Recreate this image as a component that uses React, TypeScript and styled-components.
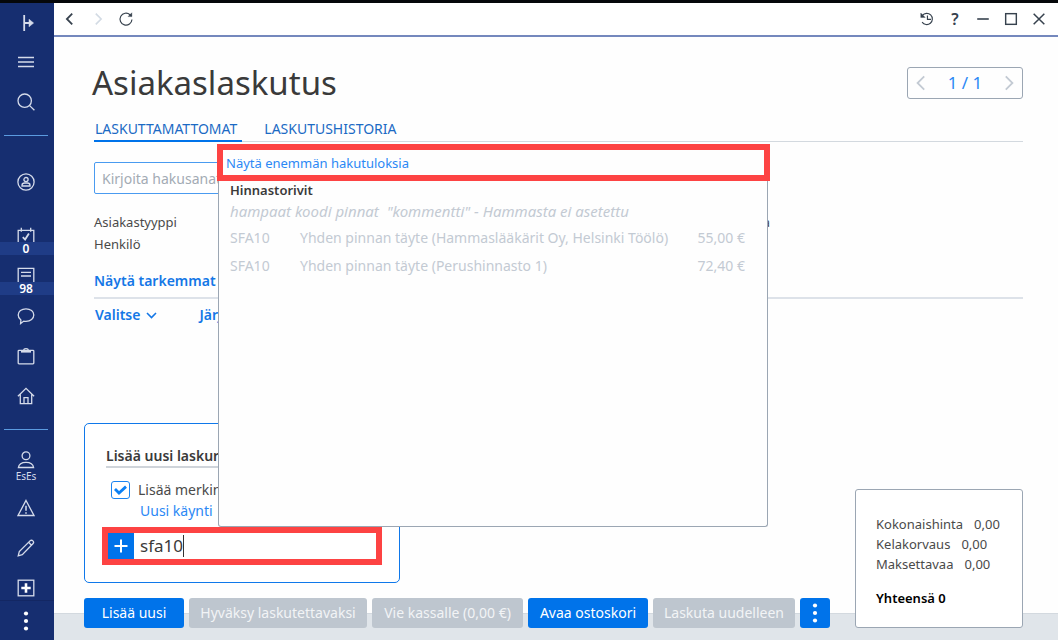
import React from "react";
import styled, { createGlobalStyle, css } from "styled-components";

const color = {
  navy: "#162e70",
  navyBand: "#1f3c86",
  navyLine: "#5b9be0",
  icon: "#d5dbea",
  blue: "#0073ea",
  link: "#1477e6",
  tab: "#1b6ac4",
  bright: "#2b88f5",
  red: "#fd4343",
  text: "#4a4a4a",
  dark: "#3a3a3a",
  muted: "#c3cad3",
  border: "#9ba6b3",
  rule: "#d3d9df",
  disabled: "#bec6cf",
  footer: "#e0e5ea",
};

const GlobalStyle = createGlobalStyle`
  *, *::before, *::after { box-sizing: border-box; }
  body {
    margin: 0;
    background: #fefefe;
    color: ${color.text};
    font-family: "Noto Sans", "Open Sans", sans-serif;
    font-size: 14px;
    line-height: 20px;
  }
  button, input { font: inherit; }
  h1, h2, h3, p { margin: 0; }
`;

const Shell = styled.div`
  display: flex;
  min-height: 100vh;
  border-top: 3px solid #05070a;
`;

const Sidebar = styled.nav`
  display: flex;
  flex-direction: column;
  flex: 0 0 54px;
  background: ${color.navy};
`;

const SideButton = styled.button<{ $height?: number; $gap?: number; $end?: boolean }>`
  display: flex;
  flex-direction: column;
  align-items: center;
  justify-content: ${(p) => (p.$end ? "flex-end" : "center")};
  width: 100%;
  height: ${(p) => p.$height ?? 40}px;
  margin: ${(p) => p.$gap ?? 0}px 0 0;
  padding: 0 2px 0 0;
  border: 0;
  background: none;
  color: ${color.icon};
  position: relative;
`;

const Badge = styled.span`
  position: absolute;
  left: 0;
  right: 0;
  bottom: 1px;
  height: 13px;
  padding-right: 2px;
  background: ${color.navyBand};
  color: #fff;
  font-size: 12px;
  font-weight: 600;
  line-height: 13px;
  text-align: center;
`;

const UserName = styled.span`
  margin-bottom: 5px;
  font-size: 10px;
  line-height: 14px;
`;

const SideRule = styled.hr`
  width: 44px;
  height: 1px;
  margin: 13px 0 14px 4px;
  border: 0;
  background: ${color.navyLine};
`;

const SideMore = styled(SideButton)`
  margin-top: auto;
  padding-right: 3px;
  border-top: 1px solid #132763;
  color: #fff;
`;

const Main = styled.main`
  display: flex;
  flex-direction: column;
  flex: 1;
  min-width: 0;
`;

const WindowBar = styled.header`
  display: flex;
  justify-content: space-between;
  align-items: center;
  height: 34px;
  padding: 0 5px 0 2px;
  border-bottom: 2px solid #7488bd;
  background: #fff;
`;

const BarGroup = styled.div`
  display: flex;
`;

const BarButton = styled.button<{ $faded?: boolean }>`
  display: flex;
  align-items: center;
  justify-content: center;
  width: 28px;
  height: 30px;
  padding: 0;
  border: 0;
  background: none;
  color: ${(p) => (p.$faded ? "#d3dbe4" : "#37424e")};
  font-size: 16px;
  font-weight: 600;
`;

const Content = styled.section`
  padding: 24px 35px 0 40px;
`;

const TitleRow = styled.div`
  display: flex;
  justify-content: space-between;
  align-items: center;
`;

const Title = styled.h1`
  margin-left: -2px;
  color: ${color.dark};
  font-size: 33px;
  font-weight: 400;
  line-height: 44px;
`;

const Pager = styled.div`
  display: flex;
  align-items: center;
  justify-content: space-between;
  width: 116px;
  height: 32px;
  border: 1px solid ${color.border};
  border-radius: 3px;
  color: ${color.bright};
  font-size: 17px;
`;

const PagerButton = styled.button`
  display: flex;
  padding: 0 6px;
  border: 0;
  background: none;
  color: ${color.muted};
`;

const Tabs = styled.div`
  display: flex;
  gap: 21px;
  margin-top: 14px;
  border-bottom: 1px solid ${color.rule};
`;

const Tab = styled.a<{ $active?: boolean }>`
  height: 23px;
  margin-bottom: -1px;
  padding: 0 5px 0 1px;
  border-bottom: 2px solid ${(p) => (p.$active ? color.blue : "transparent")};
  color: ${color.tab};
  text-decoration: none;
`;

const SearchInput = styled.input`
  display: block;
  width: 420px;
  height: 32px;
  margin-top: 20px;
  padding: 0 7px;
  border: 1px solid #4a9bf0;
  border-radius: 2px;
  background: #fff;
  &::placeholder { color: #a3abb4; opacity: 1; }
`;

const Facts = styled.dl`
  display: flex;
  justify-content: space-between;
  width: 676px;
  margin: 17px 0 0;
  font-size: 13px;
  line-height: 22px;
  dd { margin: 0; }
`;

const Details = styled.div`
  margin-top: 16px;
  padding-bottom: 6px;
  border-bottom: 2px solid #dde2e9;
`;

const StrongLink = styled.a`
  display: inline-flex;
  align-items: center;
  gap: 6px;
  color: ${color.link};
  font-weight: 600;
  text-decoration: none;
`;

const Toolbar = styled.div`
  display: flex;
  gap: 42px;
  margin-top: 6px;
  padding-left: 1px;
`;

const Bottom = styled.section`
  display: flex;
  justify-content: space-between;
  align-items: flex-end;
  margin-top: auto;
  padding: 0 35px 12px 30px;
  background: linear-gradient(to top, ${color.footer} 26px, ${color.rule} 26px, ${color.rule} 27px, transparent 27px);
`;

const AddCard = styled.form`
  width: 316px;
  padding: 22px 19px 17px 18px;
  border: 1px solid #0f78ea;
  border-radius: 5px;
  background: #fff;
`;

const CardTitle = styled.h2`
  margin-left: 3px;
  border-bottom: 2px solid #cfd4da;
  color: ${color.dark};
  font-size: 14px;
  font-weight: 600;
  line-height: 20px;
`;

const CheckRow = styled.label`
  display: flex;
  align-items: center;
  gap: 8px;
  margin: 12px 0 0 8px;
`;

const CheckBox = styled.input`
  appearance: none;
  width: 19px;
  height: 18px;
  margin: 0;
  border: 1px solid #1a84f0;
  border-radius: 3px;
  background: #fff url("data:image/svg+xml,%3Csvg xmlns='http://www.w3.org/2000/svg' viewBox='0 0 17 16'%3E%3Cpath d='M3 7 7 11 14 4.600' fill='none' stroke='%230a80f5' stroke-width='2.800'/%3E%3C/svg%3E") center / 100% no-repeat;
`;

const VisitLink = styled.a`
  display: block;
  margin: 1px 0 0 37px;
  color: ${color.bright};
  text-decoration: none;
`;

const Combo = styled.div`
  display: flex;
  position: relative;
  width: 280px;
  height: 38px;
  margin-top: 6px;
  margin-left: -1px;
  border: 6px solid ${color.red};
  background: #fff;
`;

const PlusButton = styled.button`
  display: flex;
  align-items: center;
  justify-content: center;
  flex: 0 0 26px;
  padding: 0;
  border: 0;
  background: ${color.blue};
  color: #fff;
`;

const ComboField = styled.span`
  display: flex;
  align-items: center;
  flex: 1;
  min-width: 0;
  padding-left: 6px;
`;

const ComboInput = styled.input`
  field-sizing: content;
  min-width: 10px;
  padding: 0;
  border: 0;
  border-right: 1px solid #333;
  outline: 0;
  background: none;
  color: ${color.dark};
  font-size: 17px;
  line-height: 22px;
`;

const Popup = styled.div`
  position: absolute;
  left: 110px;
  bottom: calc(100% + 6px);
  z-index: 2;
  width: 550px;
  height: 383px;
  border: 1px solid ${color.border};
  border-top: 0;
  border-radius: 3px;
  background: #fefefe;
  color: ${color.muted};
`;

const MoreResults = styled.a`
  display: block;
  height: 37px;
  margin: 0 -3px 0 -2px;
  padding: 2px 3px;
  border: 6px solid ${color.red};
  color: ${color.bright};
  font-size: 13px;
  line-height: 22px;
  text-decoration: none;
`;

const PopupBody = styled.div`
  padding: 0 22px 0 11px;
`;

const PopupTitle = styled.h3`
  color: ${color.dark};
  font-size: 13px;
  font-weight: 600;
  line-height: 18px;
`;

const PopupHint = styled.p`
  font-size: 15px;
  font-style: italic;
  line-height: 25px;
  white-space: pre;
`;

const PriceTable = styled.table`
  width: 100%;
  border-collapse: collapse;
  td { height: 28px; padding: 0; }
  td:first-child { width: 70px; }
  td:last-child { text-align: right; }
`;

const Actions = styled.div`
  display: flex;
  gap: 5px;
  margin-top: 15px;
`;

const ActionButton = styled.button<{ $width: number }>`
  display: flex;
  align-items: center;
  justify-content: center;
  width: ${(p) => p.$width}px;
  height: 30px;
  padding: 0;
  border: 0;
  border-radius: 3px;
  background: ${color.blue};
  color: #fff;
  white-space: nowrap;
  ${(p) =>
    p.disabled &&
    css`
      background: ${color.disabled};
      color: #f2f4f6;
    `}
`;

const Summary = styled.aside`
  width: 168px;
  height: 139px;
  padding: 24px 20px;
  border: 1px solid ${color.border};
  border-radius: 3px;
  background: #fff;
  font-size: 13px;
`;

const SummaryLine = styled.p`
  display: flex;
  gap: 11px;
`;

const SummaryTotal = styled.p`
  margin-top: 14px;
  color: #000;
  font-weight: 600;
`;

type IconProps = { size?: number; w?: number; children: React.ReactNode };
const Icon = ({ size = 18, w = 1.3, children }: IconProps) => (
  <svg width={size} height={size} viewBox="0 0 18 18" fill="none" stroke="currentColor" strokeWidth={w} aria-hidden="true">
    {children}
  </svg>
);

const Dots = () => (
  <svg width="6" height="22" viewBox="0 0 6 22" fill="currentColor" aria-hidden="true">
    <circle cx="3" cy="3.5" r="2.1" />
    <circle cx="3" cy="11" r="2.1" />
    <circle cx="3" cy="18.5" r="2.1" />
  </svg>
);

const rows = [
  ["SFA10", "Yhden pinnan täyte (Hammaslääkärit Oy, Helsinki Töölö)", "55,00 €"],
  ["SFA10", "Yhden pinnan täyte (Perushinnasto 1)", "72,40 €"],
];

const totals = [
  ["Kokonaishinta", "0,00"],
  ["Kelakorvaus", "0,00"],
  ["Maksettavaa", "0,00"],
];

function SideNav() {
  return (
    <Sidebar>
      <SideButton $height={39} aria-label="Laajenna">
        <Icon w={1.8}><path d="M7.2 1v16M7.2 9h8" /><path d="M12 5.200 16.600 9 12 12.800z" fill="currentColor" strokeWidth=".5" /></Icon>
      </SideButton>
      <SideButton aria-label="Valikko">
        <Icon w={1.4}><path d="M1 4.500h16M1 9h16M1 13.500h16" /></Icon>
      </SideButton>
      <SideButton aria-label="Haku">
        <Icon><circle cx="7.700" cy="7.700" r="6.700" /><path d="m12.400 12.400 5 4.800" /></Icon>
      </SideButton>
      <SideRule />
      <SideButton $gap={12} aria-label="Asiakas">
        <Icon><circle cx="9" cy="9" r="8.100" /><circle cx="9" cy="6.600" r="2.100" /><path d="M5 13v-.8c0-1.300 1.200-2.200 2.600-2.200h2.800c1.400 0 2.600.9 2.600 2.200v.8z" /></Icon>
      </SideButton>
      <SideButton $gap={14} aria-label="Tehtävät">
        <Icon><path d="M1.200 18V3.300h15.600V18M4.300.8v4M13.700.8v4" /><path d="m5.800 10.200 2.300 2.400 3.800-6" strokeWidth="1.800" /></Icon>
        <Badge>0</Badge>
      </SideButton>
      <SideButton aria-label="Viestit">
        <Icon><path d="M1.200 18V1.400h15.600V18M4 5.400h10M4 9h10" /></Icon>
        <Badge>98</Badge>
      </SideButton>
      <SideButton aria-label="Keskustelu">
        <Icon><path d="M9 1.800c4.500 0 7.800 2.700 7.800 6.200s-3.300 6.300-7.800 6.300c-.8 0-1.500 0-2.200-.2L3.600 16.500l.3-3.500C2.200 11.800 1.200 10 1.200 8 1.200 4.500 4.500 1.800 9 1.800z" /></Icon>
      </SideButton>
      <SideButton aria-label="Kalenteri">
        <Icon><rect x="1.200" y="3.300" width="15.600" height="13.500" rx=".8" /><path d="M4 4.300h10" strokeWidth="2.600" /><path d="M6.800 3c0-1.800 4.400-1.800 4.400 0" /></Icon>
      </SideButton>
      <SideButton aria-label="Koti">
        <Icon><path d="M.9 9.300 9 1.300l8.100 8M3.300 7.500v9.200h11.400V7.500M7 16.500v-5.800h4v5.800" /></Icon>
      </SideButton>
      <SideRule />
      <SideButton $height={44} $end>
        <Icon><circle cx="9" cy="4.800" r="3.900" /><path d="M1.400 16.500c.5-3.300 3.400-5.100 7.600-5.100s7.100 1.800 7.600 5.100z" /></Icon>
        <UserName>EsEs</UserName>
      </SideButton>
      <SideButton aria-label="Varoitukset">
        <Icon><path d="M9 1.500 17 16.500H1z" /><path d="M9 6.800v5M9 13.300v1.500" strokeWidth="1.500" /></Icon>
      </SideButton>
      <SideButton aria-label="Muokkaa">
        <Icon><path d="M1.200 16.800 2.300 12.600 13 1.900c.9-.9 2.100-.8 2.900 0s.9 2 0 2.900L5.300 15.600zM11.600 3.300l2.900 2.900" /></Icon>
      </SideButton>
      <SideButton $height={29} $end aria-label="Lisää">
        <Icon><rect x="1.200" y="1.200" width="15.600" height="15.600" /><path d="M9 4.300v9.400M4.300 9h9.400" stroke="#fff" strokeWidth="2.600" /></Icon>
      </SideButton>
      <SideMore $height={40} aria-label="Lisää toimintoja"><Dots /></SideMore>
    </Sidebar>
  );
}

function TopBar() {
  return (
    <WindowBar>
      <BarGroup>
        <BarButton aria-label="Takaisin"><Icon size={16} w={2}><path d="M11.500 3 5.500 9l6 6" /></Icon></BarButton>
        <BarButton $faded aria-label="Eteenpäin"><Icon size={16} w={1.800}><path d="m6.500 3 6 6-6 6" /></Icon></BarButton>
        <BarButton aria-label="Päivitä"><Icon size={16}><path d="M15.700 9.500A6.700 6.700 0 1 1 13.500 4.200l1.700 1.600" /><path d="M15.600 2v4.300h-4.300z" fill="currentColor" strokeWidth=".4" /></Icon></BarButton>
      </BarGroup>
      <BarGroup>
        <BarButton aria-label="Historia"><Icon size={16}><path d="M3.800 5A6.300 6.300 0 1 1 3.500 12.500M9.500 5v4.500h4" /><path d="M2 2.300v5h5z" fill="currentColor" strokeWidth=".4" /></Icon></BarButton>
        <BarButton>?</BarButton>
        <BarButton aria-label="Pienennä"><Icon size={16} w={1.800}><path d="M2.500 9h13" /></Icon></BarButton>
        <BarButton aria-label="Suurenna"><Icon size={16} w={1.600}><rect x="3" y="3" width="12" height="12" /></Icon></BarButton>
        <BarButton aria-label="Sulje"><Icon size={16} w={1.700}><path d="m3 3 12 12M15 3 3 15" /></Icon></BarButton>
      </BarGroup>
    </WindowBar>
  );
}

export default function App() {
  return (
    <>
      <GlobalStyle />
      <Shell>
        <SideNav />
        <Main>
          <TopBar />
          <Content>
            <TitleRow>
              <Title>Asiakaslaskutus</Title>
              <Pager>
                <PagerButton aria-label="Edellinen"><Icon size={16} w={2}><path d="M11.500 1.500 4 9l7.500 7.500" /></Icon></PagerButton>
                1 / 1
                <PagerButton aria-label="Seuraava"><Icon size={16} w={2}><path d="M6.500 1.500 14 9l-7.500 7.500" /></Icon></PagerButton>
              </Pager>
            </TitleRow>
            <Tabs>
              <Tab href="#laskuttamattomat" $active>LASKUTTAMATTOMAT</Tab>
              <Tab href="#historia">LASKUTUSHISTORIA</Tab>
            </Tabs>
            <SearchInput aria-label="Hakusanat" placeholder="Kirjoita hakusanat" />
            <Facts>
              <div>
                <dt>Asiakastyyppi</dt>
                <dd>Henkilö</dd>
              </div>
              <dt>a</dt>
            </Facts>
            <Details>
              <StrongLink href="#tiedot">Näytä tarkemmat h</StrongLink>
            </Details>
            <Toolbar>
              <StrongLink href="#valitse">
                Valitse
                <svg width="11" height="7" viewBox="0 0 11 7" fill="none" stroke="currentColor" strokeWidth="1.600" aria-hidden="true"><path d="m1 1 4.500 4.500L10 1" /></svg>
              </StrongLink>
              <StrongLink href="#jarjesta">Järjestä</StrongLink>
            </Toolbar>
          </Content>
          <Bottom>
            <div>
              <AddCard onSubmit={(e) => e.preventDefault()}>
                <CardTitle>Lisää uusi laskurivi</CardTitle>
                <CheckRow>
                  <CheckBox type="checkbox" defaultChecked />
                  Lisää merkintä
                </CheckRow>
                <VisitLink href="#kaynti">Uusi käynti</VisitLink>
                <Combo>
                  <PlusButton type="button" aria-label="Lisää rivi">
                    <Icon w={2}><path d="M9 2.500v13M2.500 9h13" /></Icon>
                  </PlusButton>
                  <ComboField>
                    <ComboInput aria-label="Laskurivi" defaultValue="sfa10" />
                  </ComboField>
                  <Popup>
                    <MoreResults href="#lisaa">Näytä enemmän hakutuloksia</MoreResults>
                    <PopupBody>
                      <PopupTitle>Hinnastorivit</PopupTitle>
                      <PopupHint>{'hampaat koodi pinnat  "kommentti" - Hammasta ei asetettu'}</PopupHint>
                      <PriceTable>
                        <tbody>
                          {rows.map(([code, name, price]) => (
                            <tr key={price}>
                              <td>{code}</td>
                              <td>{name}</td>
                              <td>{price}</td>
                            </tr>
                          ))}
                        </tbody>
                      </PriceTable>
                    </PopupBody>
                  </Popup>
                </Combo>
              </AddCard>
              <Actions>
                <ActionButton $width={100}>Lisää uusi</ActionButton>
                <ActionButton $width={178} disabled>Hyväksy laskutettavaksi</ActionButton>
                <ActionButton $width={151} disabled>Vie kassalle (0,00 €)</ActionButton>
                <ActionButton $width={120}>Avaa ostoskori</ActionButton>
                <ActionButton $width={142} disabled>Laskuta uudelleen</ActionButton>
                <ActionButton $width={30} aria-label="Lisää toimintoja"><Dots /></ActionButton>
              </Actions>
            </div>
            <Summary>
              {totals.map(([label, value]) => (
                <SummaryLine key={label}>
                  <span>{label}</span>
                  <span>{value}</span>
                </SummaryLine>
              ))}
              <SummaryTotal>Yhteensä 0</SummaryTotal>
            </Summary>
          </Bottom>
        </Main>
      </Shell>
    </>
  );
}
